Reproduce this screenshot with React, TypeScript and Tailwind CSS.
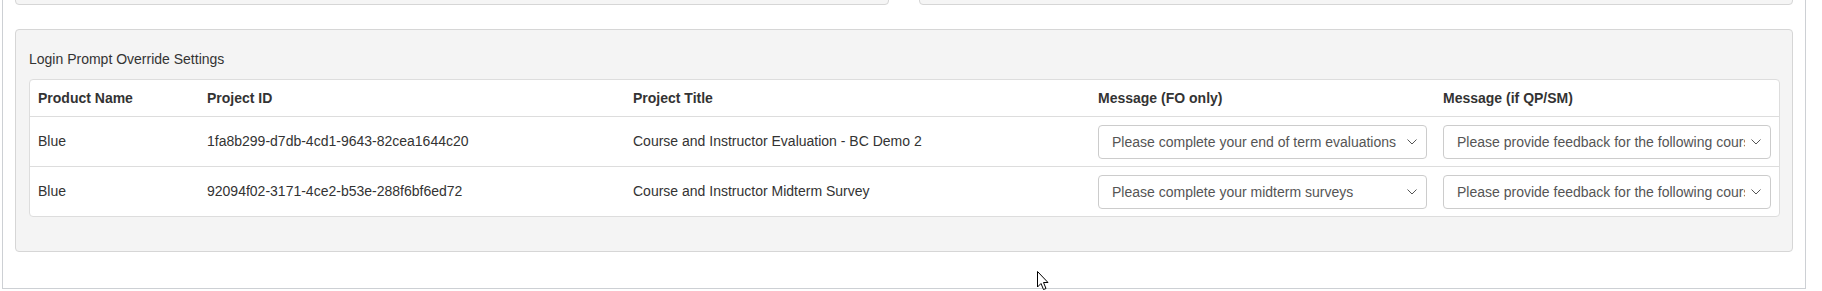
import React from "react";

type Row = {
  product: string;
  id: string;
  title: string;
  fo: string;
  qp: string;
};

const ROWS: Row[] = [
  {
    product: "Blue",
    id: "1fa8b299-d7db-4cd1-9643-82cea1644c20",
    title: "Course and Instructor Evaluation - BC Demo 2",
    fo: "Please complete your end of term evaluations",
    qp: "Please provide feedback for the following courses",
  },
  {
    product: "Blue",
    id: "92094f02-3171-4ce2-b53e-288f6bf6ed72",
    title: "Course and Instructor Midterm Survey",
    fo: "Please complete your midterm surveys",
    qp: "Please provide feedback for the following courses",
  },
];

const cols = "grid grid-cols-[169px_426px_465px_345px_minmax(0,1fr)]";

function Select({ value }: { value: string }) {
  return (
    <div className="relative h-[34px] w-full min-w-0 rounded-[4px] border border-[#cccccc] bg-white">
      <div className="mr-[25px] h-full overflow-hidden whitespace-nowrap pl-[13px] leading-[32px] text-[#555555]">
        {value}
      </div>
      <svg
        className="absolute right-[9px] top-[13px]"
        width="10"
        height="6"
        viewBox="0 0 10 6"
        fill="none"
      >
        <polyline points="0.5,0.5 5,5 9.5,0.5" stroke="#555555" strokeWidth="1" />
      </svg>
    </div>
  );
}

export default function App() {
  return (
    <div className="relative h-[291px] w-full overflow-hidden bg-white font-['Liberation_Sans',Arial,sans-serif] text-[14px] text-[#333333]">
      <div className="ml-[2px] flex h-[289px] w-[1804px] flex-col border-x border-b border-[#cdd0d4] px-3">
        {/* top panels, only their bottoms show */}
        <div className="-mt-[40px] grid grid-cols-2 gap-[30px]">
          <div className="h-[45px] rounded-[4px] border border-[#d6d6d6] bg-[#f5f5f5]" />
          <div className="h-[45px] rounded-[4px] border border-[#d6d6d6] bg-[#f5f5f5]" />
        </div>

        {/* Login prompt override panel */}
        <div className="mt-6 h-[223px] rounded-[4px] border border-[#d6d6d6] bg-[#f4f4f4] pl-[13px] pr-[12px]">
          <div className="pt-[20px] leading-[18px]">Login Prompt Override Settings</div>
          <div className="mt-[11px] rounded-[4px] border border-[#dddddd] bg-white">
            <div className={`${cols} h-[37px] items-center border-b border-[#dddddd] font-bold`}>
              <div className="px-2">Product Name</div>
              <div className="px-2">Project ID</div>
              <div className="px-2">Project Title</div>
              <div className="px-2">Message (FO only)</div>
              <div className="px-2">Message (if QP/SM)</div>
            </div>
            {ROWS.map((r, i) => (
              <div
                key={r.id}
                className={`${cols} items-center ${i < ROWS.length - 1 ? "h-[50px] border-b border-[#dddddd]" : "h-[49px]"}`}
              >
                <div className="px-2">{r.product}</div>
                <div className="px-2">{r.id}</div>
                <div className="px-2">{r.title}</div>
                <div className="min-w-0 px-2">
                  <Select value={r.fo} />
                </div>
                <div className="min-w-0 px-2">
                  <Select value={r.qp} />
                </div>
              </div>
            ))}
          </div>
        </div>
      </div>

      {/* mouse pointer */}
      <svg
        className="absolute left-[1036px] top-[270px]"
        width="13"
        height="21"
        viewBox="0 0 13 21"
      >
        <path
          d="M1.5 1.5 L1.5 17 L5 13.5 L7.5 19.5 L10 18.5 L7.5 12.5 L12 12.5 Z"
          fill="#ffffff"
          stroke="#000000"
          strokeWidth="1"
          strokeLinejoin="miter"
        />
      </svg>
    </div>
  );
}
